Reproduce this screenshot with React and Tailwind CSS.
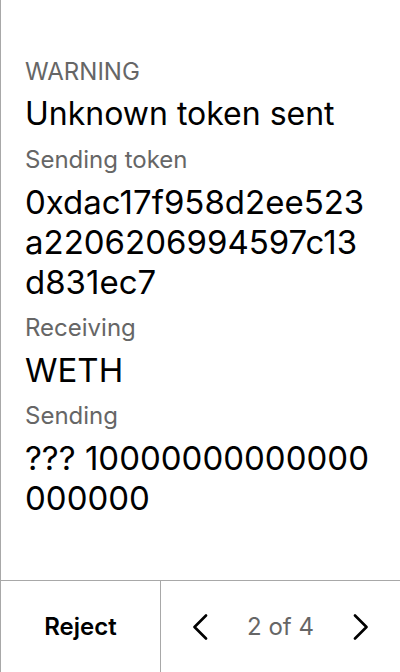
const FIELDS = [
  { label: 'Sending token', value: '0xdac17f958d2ee523a2206206994597c13d831ec7' },
  { label: 'Receiving', value: 'WETH' },
  { label: 'Sending', value: '??? 10000000000000000000' },
];

function Chevron({ dir }) {
  return (
    <svg width="16" height="26" viewBox="0 0 16 26" fill="none" stroke="black" strokeWidth="2.6" strokeLinecap="round" strokeLinejoin="round">
      {dir === 'left' ? <path d="M14 1.5 L2.5 13 L14 24.5" /> : <path d="M2 1.5 L13.5 13 L2 24.5" />}
    </svg>
  );
}

function Field({ label, value }) {
  return (
    <div className="mt-3">
      <p className="text-[24px] leading-[28px] text-[#666666]">{label}</p>
      <p className="mt-2 text-[33px] leading-[40px] text-black break-all">{value}</p>
    </div>
  );
}

export default function App() {
  return (
    <div
      className="w-[400px] h-[672px] flex flex-col bg-white border-l border-[#a8a8a8]"
      style={{ fontFamily: 'Inter, "Noto Sans", sans-serif' }}
    >
      <main className="flex-1 px-6 pt-[58px]">
        <p className="text-[24px] leading-[28px] text-[#666666]">WARNING</p>
        <h1 className="mt-2 text-[32px] leading-[40px] text-black">Unknown token sent</h1>
        {FIELDS.map((f) => (
          <Field key={f.label} label={f.label} value={f.value} />
        ))}
      </main>

      <footer className="h-[92px] flex border-t border-[#a8a8a8]">
        <button className="w-[159px] flex items-center justify-center text-[24px] font-semibold text-black">
          Reject
        </button>
        <div className="flex-1 flex items-center justify-between pl-[31px] pr-[31px] border-l border-[#a8a8a8]">
          <Chevron dir="left" />
          <span className="text-[24px] text-[#666666]">2 of 4</span>
          <Chevron dir="right" />
        </div>
      </footer>
    </div>
  );
}
